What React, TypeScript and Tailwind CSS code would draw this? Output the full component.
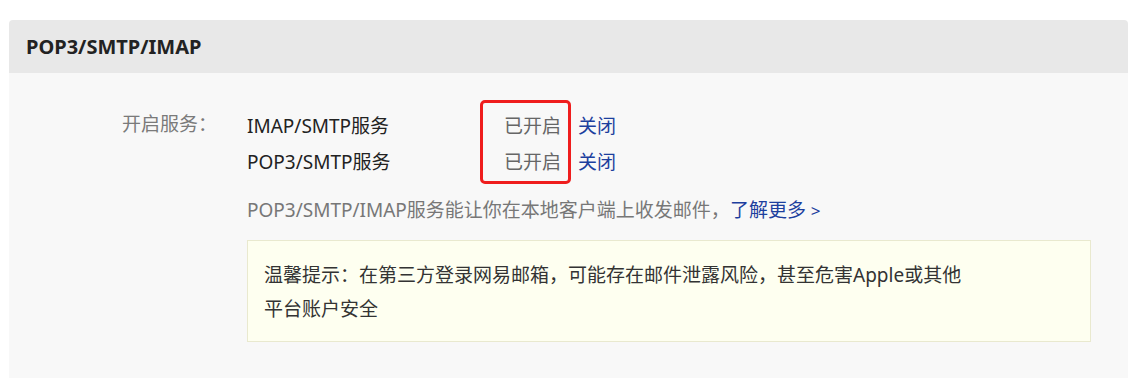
const services = [
  { name: 'IMAP/SMTP服务', status: '已开启' },
  { name: 'POP3/SMTP服务', status: '已开启' },
]

export default function App() {
  return (
    <div className="min-h-[378px] bg-white pt-[20px] pl-[9px] font-['Noto_Sans','Noto_Sans_CJK_SC',sans-serif]">
      <div className="w-[1119px] rounded-t-[4px] overflow-hidden">
        {/* Header */}
        <div className="h-[53px] bg-[#e8e8e8] px-[17px] flex items-center">
          <h2 className="text-[20px] font-bold text-[#222] leading-none">POP3/SMTP/IMAP</h2>
        </div>

        {/* Body */}
        <div className="bg-[#f8f8f8] pt-[35px] pb-[40px] pl-[113px] flex text-[19px]">
          <div className="w-[125px] leading-[32px] text-[#7a7a7a] shrink-0">开启服务：</div>
          <div>
            <div className="relative">
              {services.map((s, i) => (
                <div key={i} className="flex items-center h-[36px]">
                  <div className="w-[314px] flex justify-between items-center">
                    <span className="text-[#222]">{s.name}</span>
                    <span className="text-[#666]">{s.status}</span>
                  </div>
                  <a className="ml-[17px] text-[#1d3f9e] cursor-pointer">关闭</a>
                </div>
              ))}
              {/* annotation box */}
              <div className="absolute left-[233px] top-[-8px] w-[91px] h-[84px] border-[3px] border-[#ef1d1d] rounded-[5px] pointer-events-none" />
            </div>

            <p className="mt-[12px] h-[36px] flex items-center text-[#777]">
              <span>POP3/SMTP/IMAP服务能让你在本地客户端上收发邮件，</span>
              <a className="text-[#1d3f9e] cursor-pointer">了解更多 <span className="text-[17px]">&gt;</span></a>
            </p>

            <div className="mt-[12px] w-[844px] bg-[#fefff0] border border-[#e9e9cf] pt-[17px] pb-[15px] pl-[16px]">
              <p className="leading-[34px] text-[#333]">
                温馨提示：在第三方登录网易邮箱，可能存在邮件泄露风险，甚至危害Apple或其他
                <br />
                平台账户安全
              </p>
            </div>
          </div>
        </div>
      </div>
    </div>
  )
}
